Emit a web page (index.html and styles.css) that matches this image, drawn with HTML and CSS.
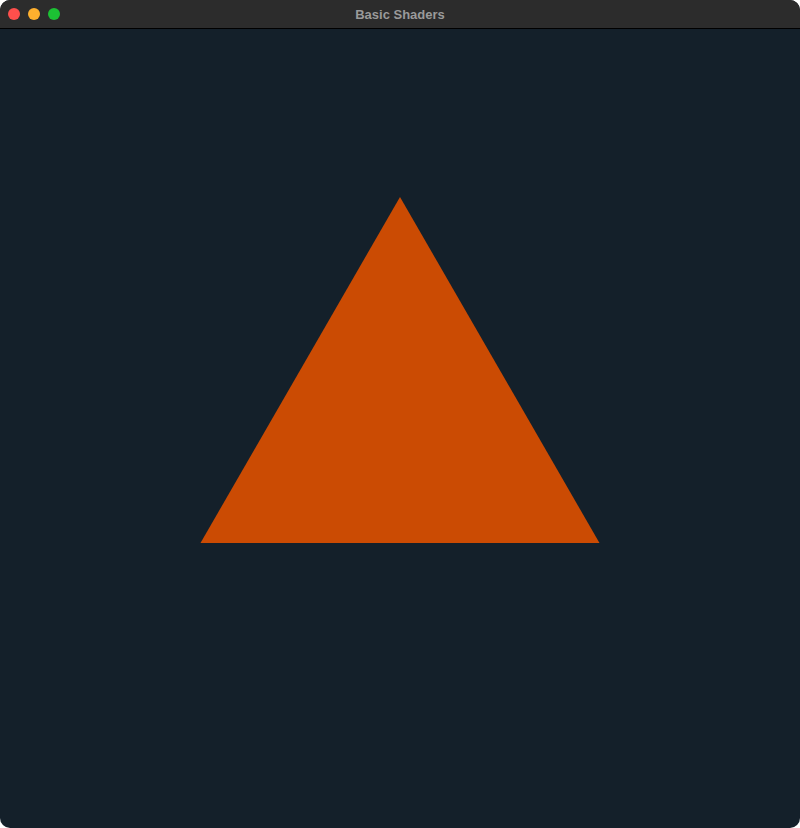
FILE: index.html
```html
<!DOCTYPE html>
<html>
<head>
<meta charset="utf-8">
<link rel="stylesheet" href="styles.css">
</head>
<body>
<div class="window">
  <div class="titlebar">
    <div class="lights">
      <span class="light red"></span>
      <span class="light yellow"></span>
      <span class="light green"></span>
    </div>
    <div class="title">Basic Shaders</div>
  </div>
  <div class="canvas">
    <svg class="scene" viewBox="0 0 800 799" width="800" height="799">
      <polygon points="400,168 599.5,514 200.5,514" fill="#cb4b03"/>
    </svg>
  </div>
</div>
</body>
</html>
```
FILE: styles.css
```css
html, body {
  margin: 0;
  padding: 0;
  background: #ffffff;
}
.window {
  width: 800px;
  height: 828px;
  border-radius: 10px;
  overflow: hidden;
  display: flex;
  flex-direction: column;
  background: #14202a;
}
.titlebar {
  height: 28px;
  background: #2c2c2c;
  border-bottom: 1px solid #000000;
  display: grid;
  grid-template-columns: 1fr;
  align-items: center;
  flex-shrink: 0;
}
.lights {
  grid-area: 1 / 1;
  display: flex;
  gap: 8px;
  padding-left: 8px;
  align-items: center;
}
.light {
  width: 12px;
  height: 12px;
  border-radius: 50%;
  display: block;
}
.red { background: #fe4f4c; }
.yellow { background: #ffb02e; }
.green { background: #1cc234; }
.title {
  grid-area: 1 / 1;
  text-align: center;
  font-family: "Liberation Sans", Arial, sans-serif;
  font-weight: bold;
  font-size: 13px;
  color: #9a9a9a;
}
.canvas {
  flex: 1;
  display: flex;
}
.scene {
  display: block;
}
```
